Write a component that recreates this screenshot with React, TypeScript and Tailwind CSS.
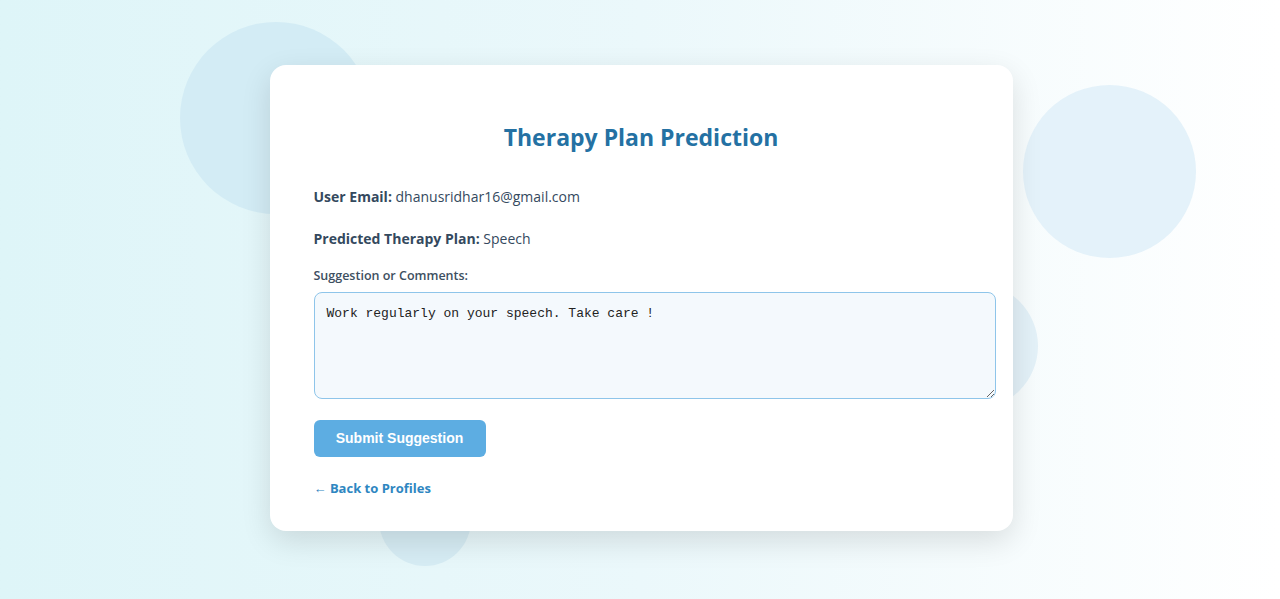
import { useState } from "react";

export default function App() {
  const [comment, setComment] = useState("Work regularly on your speech. Take care !");

  return (
    <div className="relative h-[599px] w-full overflow-hidden bg-gradient-to-r from-[#def5f8] via-[#ebf8fb] to-[#ffffff]">
      {/* decorative bubbles behind the card */}
      <div className="absolute left-[180px] top-[22px] h-[192px] w-[192px] rounded-full bg-[#d3ecf5]" />
      <div className="absolute left-[1023px] top-[85px] h-[173px] w-[173px] rounded-full bg-[#e4f2fa]" />
      <div className="absolute left-[912px] top-[283px] h-[126px] w-[126px] rounded-full bg-[#e3f1f8]" />
      <div className="absolute left-[379px] top-[474px] h-[92px] w-[92px] rounded-full bg-[#d6ecf4]" />

      <div className="relative flex justify-center pl-[2px] pt-[65px]">
        <div className="flex w-[743px] flex-col rounded-2xl bg-white px-[44px] pb-[33px] pt-[56px] font-['Open_Sans',sans-serif] text-[#34495e] shadow-[0_10px_30px_rgba(0,0,0,0.12)]">
          <h2 className="text-center text-[23px] font-bold leading-8 text-[#2471a3]">
            Therapy Plan Prediction
          </h2>

          <div className="mt-[34px] flex flex-col gap-[22px] text-[14px] leading-5">
            <p>
              <span className="font-bold">User Email:</span> dhanusridhar16@gmail.com
            </p>
            <p>
              <span className="font-bold">Predicted Therapy Plan:</span> Speech
            </p>
          </div>

          <div className="mt-[17px] flex flex-col gap-[6px]">
            <label className="text-[12.5px] font-semibold leading-5 text-[#3d4f61]">Suggestion or Comments:</label>
            <textarea
              value={comment}
              onChange={(e) => setComment(e.target.value)}
              className="h-[107px] w-[682px] resize-y rounded-lg border border-[#8ec5ea] bg-[#f4f9fd] px-3 py-[11px] font-['Liberation_Mono',monospace] text-[13px] leading-5 text-[#222222] outline-none"
            />
          </div>

          <div className="mt-[21px] flex flex-col items-start gap-[21px]">
            <button className="h-[37px] w-[172px] rounded-md bg-[#5dade2] font-['Liberation_Sans',Arial,sans-serif] text-[14px] font-bold text-white">
              Submit Suggestion
            </button>
            <a href="#" className="text-[13px] font-bold leading-5 text-[#2e86c1]">
              ← Back to Profiles
            </a>
          </div>
        </div>
      </div>
    </div>
  );
}
